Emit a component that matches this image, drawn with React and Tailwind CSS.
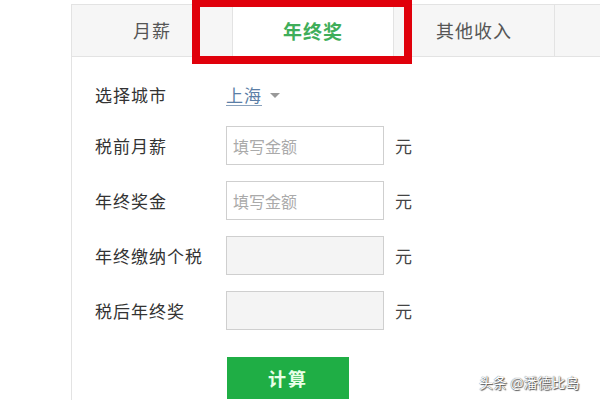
import React from "react";

const tabs = ["月薪", "年终奖", "其他收入", ""];

const rows = [
  { label: "税前月薪", placeholder: "填写金额", disabled: false },
  { label: "年终奖金", placeholder: "填写金额", disabled: false },
  { label: "年终缴纳个税", placeholder: "", disabled: true },
  { label: "税后年终奖", placeholder: "", disabled: true },
];

const App = () => {
  return (
    <div
      className="relative w-[600px] h-[400px] overflow-hidden bg-white text-[#333]"
      style={{ fontFamily: '"Noto Sans CJK SC", "Noto Sans", sans-serif' }}
    >
      <div className="ml-[71px] mt-[4px] h-[396px] border-l border-t border-[#e3e3e3]">
        {/* Tab bar */}
        <div className="flex h-[52px] w-[700px]">
          {tabs.map((t, i) =>
            i === 1 ? (
              <div
                key={i}
                className="w-[161px] shrink-0 flex items-center justify-center bg-white border-r border-[#e3e3e3] text-[19px] font-bold text-[#3fae5a] tracking-[1px]"
              >
                {t}
              </div>
            ) : (
              <div
                key={i}
                className="w-[161px] shrink-0 flex items-center justify-center bg-[#f6f6f6] border-r border-b border-[#e3e3e3] text-[18px] text-[#555] tracking-[1px]"
              >
                {t}
              </div>
            )
          )}
        </div>

        {/* Form */}
        <div className="pl-[23px] pt-[18px] text-[17px] tracking-[1px]">
          <div className="flex items-center h-[39px]">
            <span className="w-[131px] shrink-0">选择城市</span>
            <span className="text-[#5b7ea6] underline underline-offset-[3px] decoration-[#8aa2bd]">上海</span>
            <span className="ml-[8px] mt-[2px] w-0 h-0 border-l-[5px] border-r-[5px] border-t-[5px] border-l-transparent border-r-transparent border-t-[#999]"></span>
          </div>

          {rows.map((r, i) => (
            <div key={i} className={`flex items-center h-[39px] ${i === 0 ? "mt-[12px]" : "mt-[16px]"}`}>
              <span className="w-[131px] shrink-0">{r.label}</span>
              <div
                className={`w-[158px] h-[39px] border border-[#cfcfcf] flex items-center pl-[6px] text-[16px] text-[#aaa] tracking-normal ${
                  r.disabled ? "bg-[#f4f4f4]" : "bg-white"
                }`}
              >
                {r.placeholder}
              </div>
              <span className="ml-[11px] text-[#444]">元</span>
            </div>
          ))}

          <div className="mt-[27px] pl-[132px]">
            <button className="w-[122px] h-[42px] bg-[#1fae45] text-[#e8ffe8] text-[18px] font-bold tracking-[2px] flex items-center justify-center">
              计算
            </button>
          </div>
        </div>
      </div>

      {/* red highlight annotation over the tab */}
      <div className="absolute left-[192px] top-[-1px] w-[220px] h-[65px] border-[8px] border-[#e0000b]"></div>

      {/* watermark */}
      <div
        className="absolute left-[479px] top-[372px] text-[14px] text-white"
        style={{ textShadow: "0 0 1px #333, 1px 1px 1px #555" }}
      >
        头条 @潘德比岛
      </div>
    </div>
  );
};

export default App;
